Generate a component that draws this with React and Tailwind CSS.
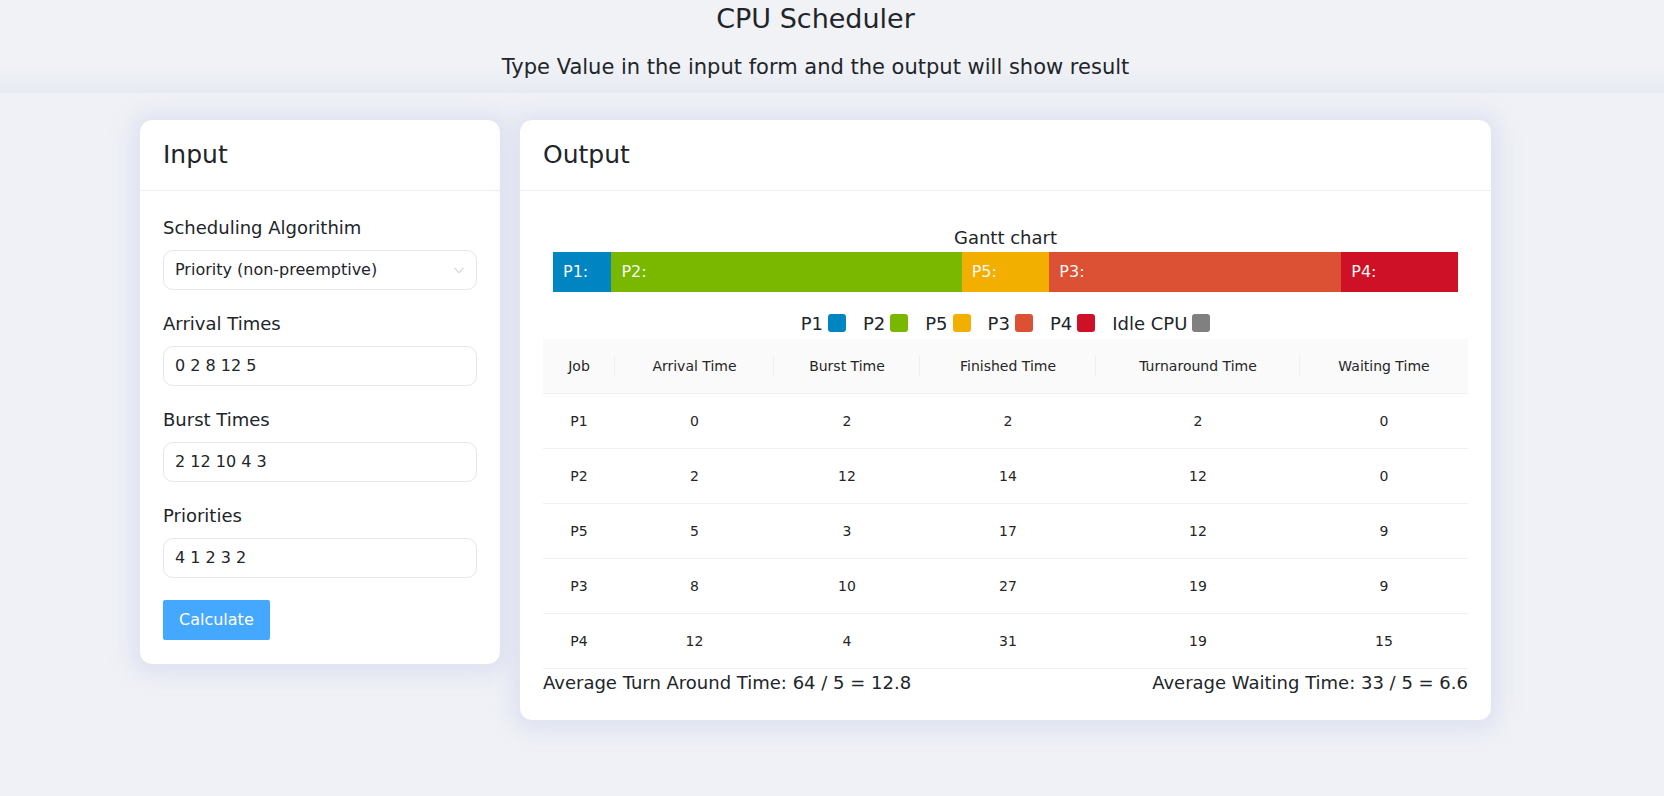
import React from "react";

const jobs = [
  { name: "P1", arrival: 0, burst: 2, finished: 2, turnaround: 2, waiting: 0 },
  { name: "P2", arrival: 2, burst: 12, finished: 14, turnaround: 12, waiting: 0 },
  { name: "P5", arrival: 5, burst: 3, finished: 17, turnaround: 12, waiting: 9 },
  { name: "P3", arrival: 8, burst: 10, finished: 27, turnaround: 19, waiting: 9 },
  { name: "P4", arrival: 12, burst: 4, finished: 31, turnaround: 19, waiting: 15 },
];

// gantt segments, flex grow = burst time
const segments = [
  { label: "P1:", bar: "flex-[2] bg-[#0085c3]" },
  { label: "P2:", bar: "flex-[12] bg-[#7ab800]" },
  { label: "P5:", bar: "flex-[3] bg-[#f2af00]" },
  { label: "P3:", bar: "flex-[10] bg-[#dc5034]" },
  { label: "P4:", bar: "flex-[4] bg-[#ce1126]" },
];

const legend = [
  { label: "P1", color: "bg-[#0085c3]" },
  { label: "P2", color: "bg-[#7ab800]" },
  { label: "P5", color: "bg-[#f2af00]" },
  { label: "P3", color: "bg-[#dc5034]" },
  { label: "P4", color: "bg-[#ce1126]" },
  { label: "Idle CPU", color: "bg-[#808080]" },
];

const columns = [
  { title: "Job", key: "name", col: "w-[72px]" },
  { title: "Arrival Time", key: "arrival", col: "w-[159px]" },
  { title: "Burst Time", key: "burst", col: "w-[146px]" },
  { title: "Finished Time", key: "finished", col: "w-[176px]" },
  { title: "Turnaround Time", key: "turnaround", col: "w-[204px]" },
  { title: "Waiting Time", key: "waiting", col: "" },
];

const Field = ({ label, children }) => (
  <div className="mb-5">
    <div className="text-[18px] leading-[28px] mb-2">{label}</div>
    {children}
  </div>
);

const TextBox = ({ value }) => (
  <div className="h-10 rounded-[10px] border border-[#e3e6ee] bg-white px-[11px] flex items-center text-[16px]">
    {value}
  </div>
);

const Card = ({ title, className, bodyClass, children }) => (
  <div
    className={`bg-white rounded-[13px] border border-[#e3e6ef] shadow-[0_2px_20px_6px_rgba(205,211,236,0.55)] ${className}`}
  >
    <div className="h-[71px] border-b border-[#eceef2] px-[23px] flex items-center text-[25px] leading-[30px]">
      {title}
    </div>
    <div className={bodyClass}>{children}</div>
  </div>
);

export default function App() {
  return (
    <div className="min-h-screen bg-[#eff1f6] text-[#212529] font-['DejaVu_Sans',sans-serif]">
      {/* Header */}
      <div className="bg-[linear-gradient(to_bottom,#f0f2f6_70%,#e7eaf3)] pt-[3px] pb-3 pr-[33px] text-center">
        <h1 className="text-[27px] leading-[32px]">CPU Scheduler</h1>
        <p className="mt-[18px] text-[21px] leading-[28px]">
          Type Value in the input form and the output will show result
        </p>
      </div>

      <div className="w-[1386px] mx-auto mt-[26px] flex items-start gap-[18px]">
        {/* Input */}
        <Card title="Input" className="w-[362px] shrink-0" bodyClass="px-[23px] pt-[23px] pb-6">
          <Field label="Scheduling Algorithim">
            <div className="h-10 rounded-[10px] border border-[#e3e6ee] bg-white pl-[11px] pr-3 flex items-center justify-between text-[16px]">
              <span>Priority (non-preemptive)</span>
              <svg width="10" height="7" viewBox="0 0 10 7" fill="none">
                <polyline points="0.5,0.8 5,5.8 9.5,0.8" stroke="#bfbfbf" strokeWidth="1" />
              </svg>
            </div>
          </Field>
          <Field label="Arrival Times">
            <TextBox value="0 2 8 12 5" />
          </Field>
          <Field label="Burst Times">
            <TextBox value="2 12 10 4 3" />
          </Field>
          <Field label="Priorities">
            <TextBox value="4 1 2 3 2" />
          </Field>
          <button className="h-10 px-4 mt-[2px] rounded-[2px] bg-[#45a8ff] text-white text-[16px]">
            Calculate
          </button>
        </Card>

        {/* Output */}
        <Card title="Output" className="w-[973px] shrink-0" bodyClass="px-[23px] pt-[33px] pb-6">
          <div className="text-center text-[18px] leading-[27px]">Gantt chart</div>
          <div className="mx-[10px] mt-px h-10 flex">
            {segments.map((s) => (
              <div key={s.label} className={`${s.bar} min-w-0 flex items-center text-[16px] text-[#f7f7f7]`}>
                <span className="pl-[10px]">{s.label}</span>
              </div>
            ))}
          </div>

          {/* Legend */}
          <div className="mt-[18px] mb-[3px] h-[26px] flex items-center justify-center text-[18px]">
            {legend.map((l) => (
              <div key={l.label} className="flex items-center mr-[17px] last:mr-0">
                <span>{l.label}</span>
                <span className={`ml-[5px] w-[18px] h-[18px] rounded-[3px] ${l.color}`}></span>
              </div>
            ))}
          </div>

          {/* Table */}
          <table className="w-full table-fixed border-collapse text-[14px] leading-[22px] text-[#262626]">
            <colgroup>
              {columns.map((c) => (
                <col key={c.key} className={c.col} />
              ))}
            </colgroup>
            <thead>
              <tr>
                {columns.map((c, i) => (
                  <th
                    key={c.key}
                    className={`relative bg-[#fafafa] p-4 font-normal text-center border-b border-[#f0f0f0] ${
                      i < columns.length - 1
                        ? "before:content-[''] before:absolute before:right-0 before:top-1/2 before:-translate-y-1/2 before:w-px before:h-[22px] before:bg-[#f0f0f0]"
                        : ""
                    }`}
                  >
                    {c.title}
                  </th>
                ))}
              </tr>
            </thead>
            <tbody>
              {jobs.map((j) => (
                <tr key={j.name}>
                  {columns.map((c) => (
                    <td key={c.key} className="p-4 text-center border-b border-[#f0f0f0]">
                      {j[c.key]}
                    </td>
                  ))}
                </tr>
              ))}
            </tbody>
          </table>

          <div className="flex justify-between text-[18px] leading-[27px]">
            <span>Average Turn Around Time: 64 / 5 = 12.8</span>
            <span>Average Waiting Time: 33 / 5 = 6.6</span>
          </div>
        </Card>
      </div>
    </div>
  );
}
